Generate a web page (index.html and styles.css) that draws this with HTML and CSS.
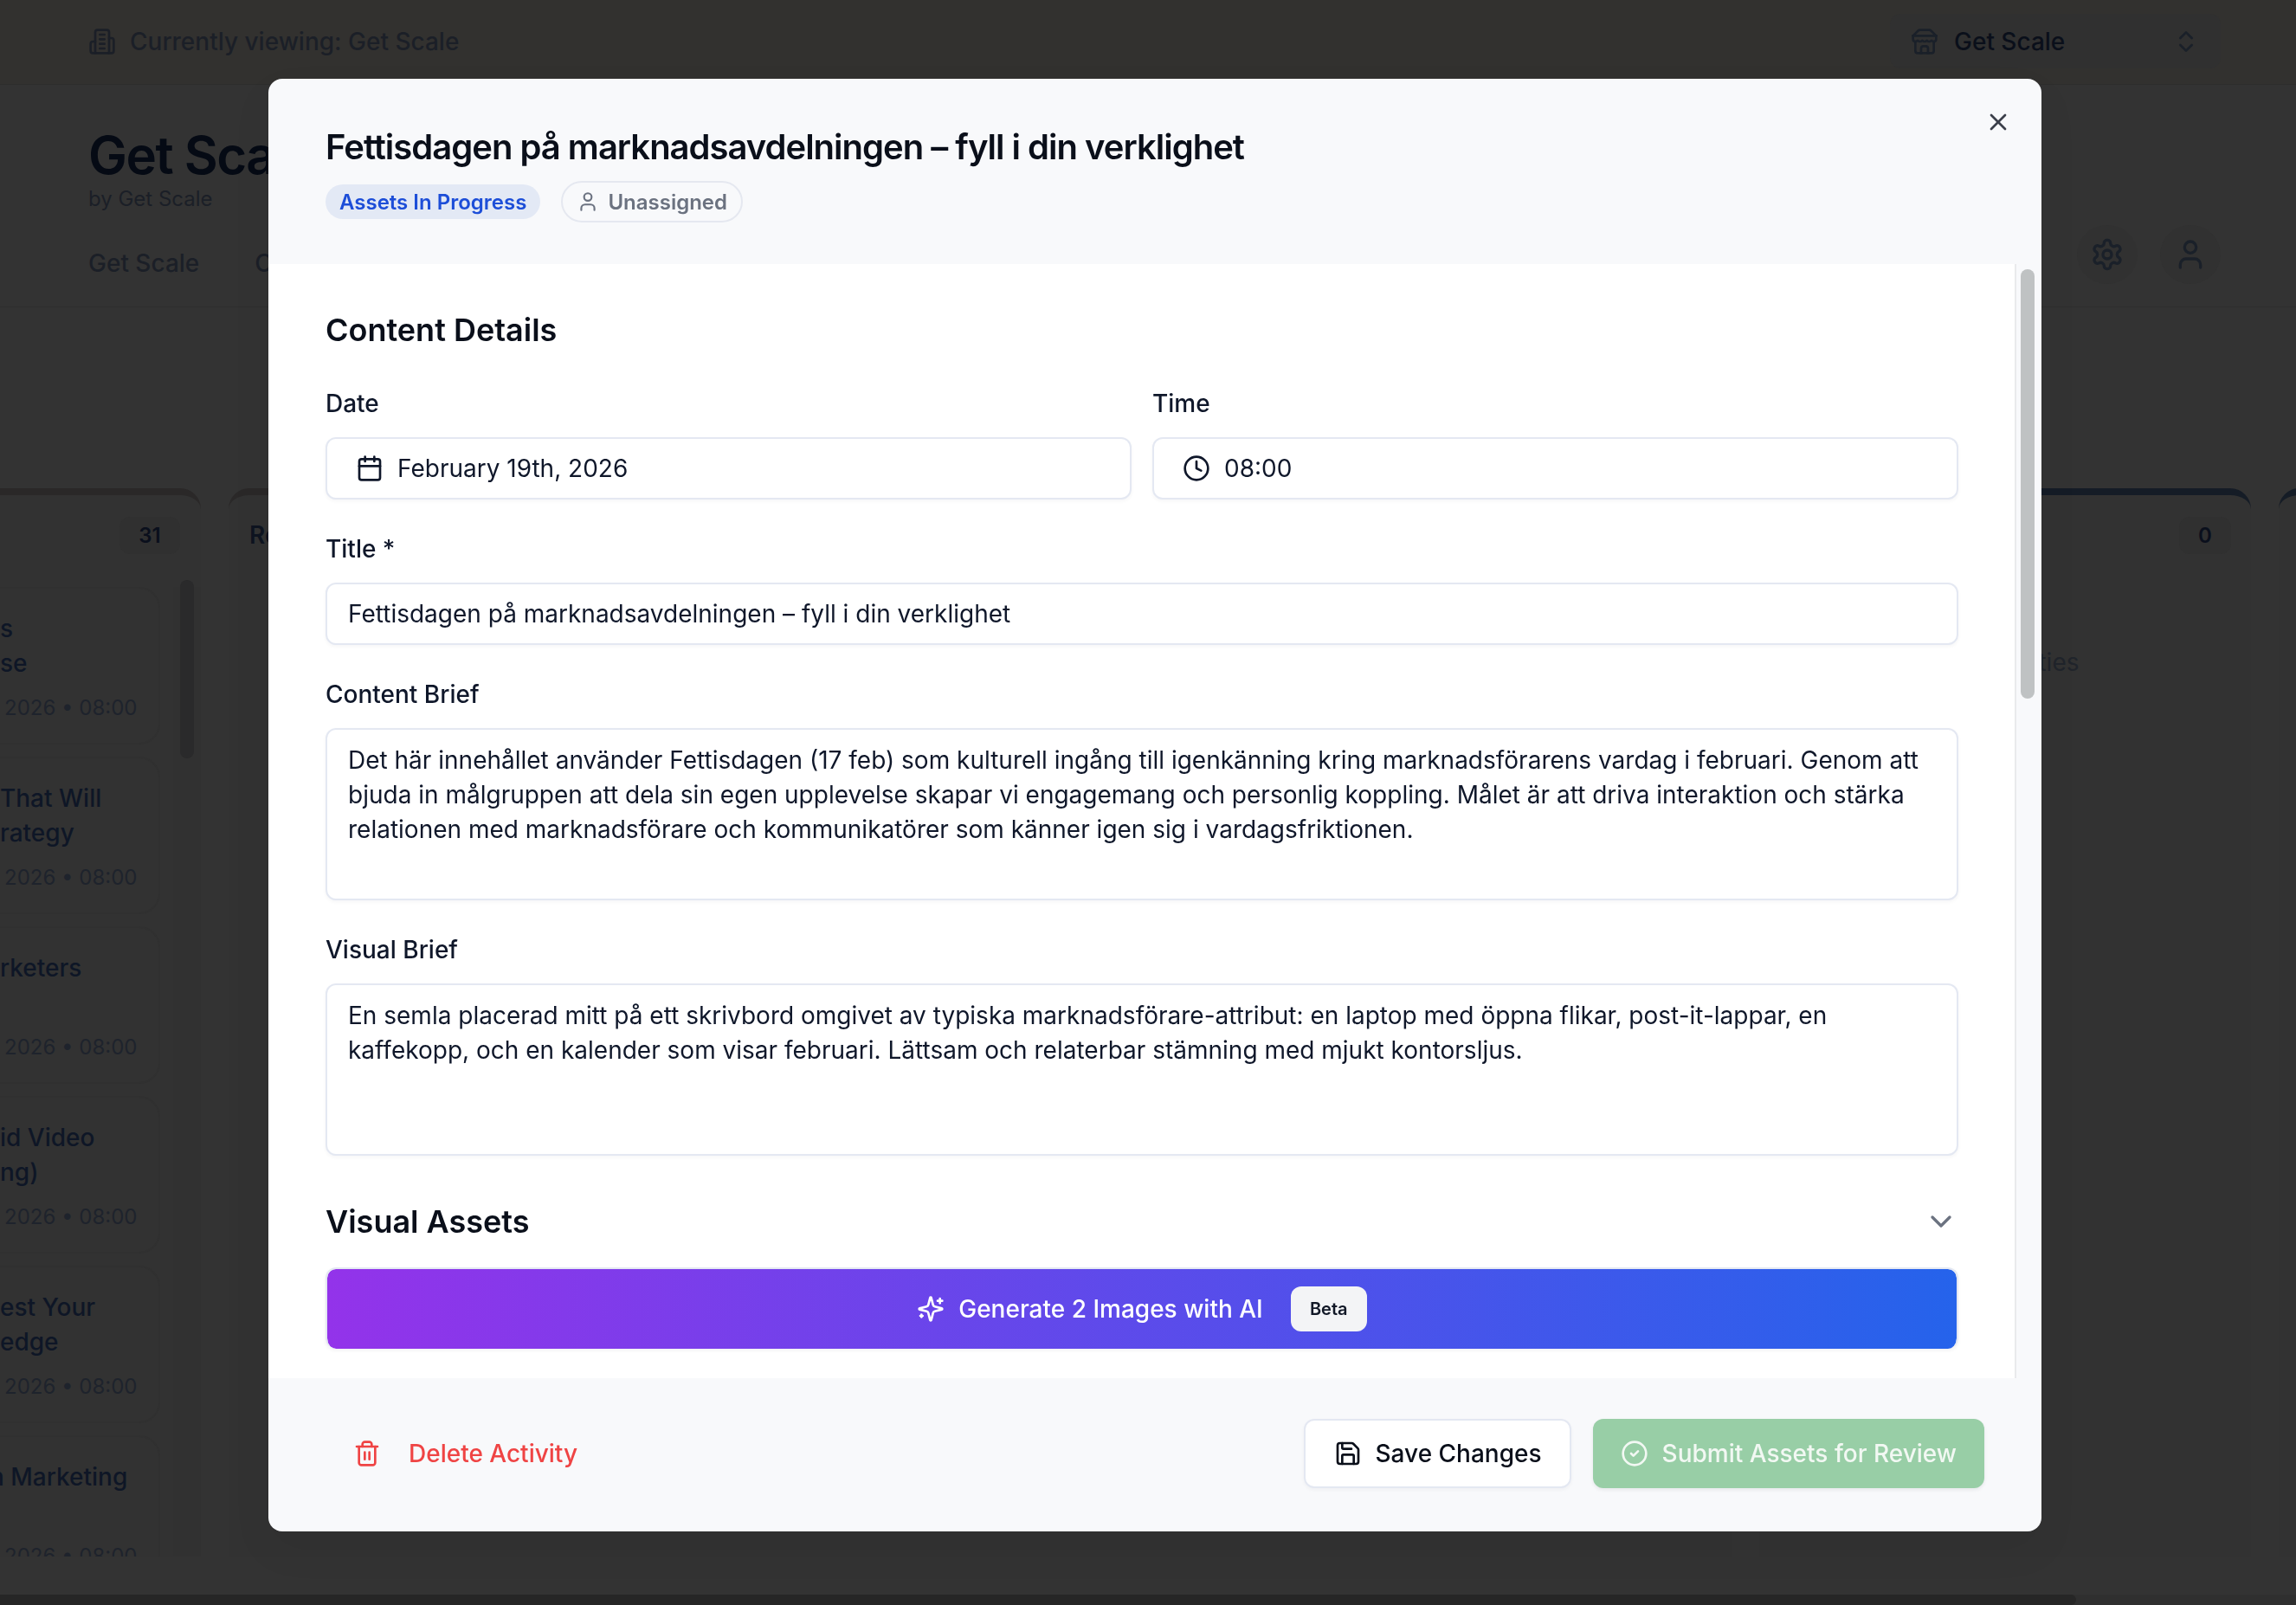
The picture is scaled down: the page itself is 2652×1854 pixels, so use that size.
FILE: index.html
```html
<!DOCTYPE html>
<html lang="en">
<head>
    <meta charset="UTF-8">
    <meta name="viewport" content="width=device-width, initial-scale=1.0">
    <title>Get Scale</title>
    <link rel="stylesheet" href="styles.css">
</head>
<body>
    <div class="page">
        <div class="topbar">
            <div class="viewing">
                <svg class="icon" viewBox="0 0 24 24"><path d="M6 22V4a2 2 0 0 1 2-2h8a2 2 0 0 1 2 2v18Z"/><path d="M6 12H4a2 2 0 0 0-2 2v6a2 2 0 0 0 2 2h2"/><path d="M18 9h2a2 2 0 0 1 2 2v9a2 2 0 0 1-2 2h-2"/><path d="M10 6h4"/><path d="M10 10h4"/><path d="M10 14h4"/><path d="M10 18h4"/></svg>
                <span>Currently viewing: Get Scale</span>
            </div>
            <div class="selector">
                <svg class="icon" viewBox="0 0 24 24"><path d="m2 7 4.41-4.41A2 2 0 0 1 7.83 2h8.34a2 2 0 0 1 1.42.59L22 7"/><path d="M4 12v8a2 2 0 0 0 2 2h12a2 2 0 0 0 2-2v-8"/><path d="M15 22v-4a2 2 0 0 0-2-2h-2a2 2 0 0 0-2 2v4"/><path d="M2 7h20"/><path d="M22 7v3a2 2 0 0 1-2 2a2.7 2.7 0 0 1-1.59-.63.7.7 0 0 0-.82 0A2.7 2.7 0 0 1 16 12a2.7 2.7 0 0 1-1.59-.63.7.7 0 0 0-.82 0A2.7 2.7 0 0 1 12 12a2.7 2.7 0 0 1-1.59-.63.7.7 0 0 0-.82 0A2.7 2.7 0 0 1 8 12a2.7 2.7 0 0 1-1.59-.63.7.7 0 0 0-.82 0A2.7 2.7 0 0 1 4 12a2 2 0 0 1-2-2V7"/></svg>
                <span class="selector-name">Get Scale</span>
                <svg class="icon" viewBox="0 0 24 24"><path d="m7 15 5 5 5-5"/><path d="m7 9 5-5 5 5"/></svg>
            </div>
        </div>

        <div class="page-head">
            <h2 class="brand">Get Scale</h2>
            <div class="brand-sub">by Get Scale</div>
            <div class="tabs">
                <div class="tab-links">
                    <span>Get Scale</span>
                    <span>Content</span>
                </div>
                <div class="head-actions">
                    <div class="round-btn">
                        <svg class="icon icon-large" viewBox="0 0 24 24"><path d="M12.22 2h-.44a2 2 0 0 0-2 2v.18a2 2 0 0 1-1 1.73l-.43.25a2 2 0 0 1-2 0l-.15-.08a2 2 0 0 0-2.73.73l-.22.38a2 2 0 0 0 .73 2.73l.15.1a2 2 0 0 1 1 1.72v.51a2 2 0 0 1-1 1.74l-.15.09a2 2 0 0 0-.73 2.73l.22.38a2 2 0 0 0 2.73.73l.15-.08a2 2 0 0 1 2 0l.43.25a2 2 0 0 1 1 1.73V20a2 2 0 0 0 2 2h.44a2 2 0 0 0 2-2v-.18a2 2 0 0 1 1-1.73l.43-.25a2 2 0 0 1 2 0l.15.08a2 2 0 0 0 2.73-.73l.22-.39a2 2 0 0 0-.73-2.73l-.15-.08a2 2 0 0 1-1-1.74v-.5a2 2 0 0 1 1-1.74l.15-.09a2 2 0 0 0 .73-2.73l-.22-.38a2 2 0 0 0-2.73-.73l-.15.08a2 2 0 0 1-2 0l-.43-.25a2 2 0 0 1-1-1.73V4a2 2 0 0 0-2-2z"/><circle cx="12" cy="12" r="3"/></svg>
                    </div>
                    <div class="round-btn">
                        <svg class="icon icon-large" viewBox="0 0 24 24"><path d="M19 21v-2a4 4 0 0 0-4-4H9a4 4 0 0 0-4 4v2"/><circle cx="12" cy="7" r="4"/></svg>
                    </div>
                </div>
            </div>
        </div>

        <div class="board">
            <div class="column column-first">
                <div class="column-head"><span class="count">31</span></div>
                <div class="column-body">
                    <div class="cards">
                        <div class="card"><div class="card-title">s<br>se</div><div class="card-meta">2026 • 08:00</div></div>
                        <div class="card"><div class="card-title">That Will<br>rategy</div><div class="card-meta">2026 • 08:00</div></div>
                        <div class="card"><div class="card-title">rketers<br>&nbsp;</div><div class="card-meta">2026 • 08:00</div></div>
                        <div class="card"><div class="card-title">id Video<br>ng)</div><div class="card-meta">2026 • 08:00</div></div>
                        <div class="card"><div class="card-title">est Your<br>edge</div><div class="card-meta">2026 • 08:00</div></div>
                        <div class="card"><div class="card-title card-title-clipped">n Marketing<br>&nbsp;</div><div class="card-meta">2026 • 08:00</div></div>
                    </div>
                    <div class="column-scroll"><div class="column-thumb"></div></div>
                </div>
            </div>
            <div class="column column-wide">
                <div class="column-head"><span class="column-name">Re</span></div>
            </div>
            <div class="column column-last">
                <div class="column-head"><span class="count">0</span></div>
                <div class="column-empty">No activities</div>
            </div>
            <div class="column column-next"></div>
        </div>

        <div class="hscroll"><div class="hscroll-thumb"></div></div>
    </div>

    <div class="modal-layer">
        <div class="modal">
            <div class="modal-head">
                <h1 class="modal-title">Fettisdagen på marknadsavdelningen – fyll i din verklighet</h1>
                <div class="badges">
                    <span class="badge-status">Assets In Progress</span>
                    <span class="badge-user">
                        <svg class="icon icon-small" viewBox="0 0 24 24"><path d="M19 21v-2a4 4 0 0 0-4-4H9a4 4 0 0 0-4 4v2"/><circle cx="12" cy="7" r="4"/></svg>
                        Unassigned
                    </span>
                </div>
                <svg class="icon modal-close" viewBox="0 0 24 24"><path d="M18 6 6 18"/><path d="m6 6 12 12"/></svg>
            </div>

            <div class="modal-body">
                <div class="modal-scroll">
                    <h2 class="section-title">Content Details</h2>

                    <div class="form-row">
                        <div class="form-group">
                            <label>Date</label>
                            <div class="field field-picker">
                                <svg class="icon" viewBox="0 0 24 24"><path d="M8 2v4"/><path d="M16 2v4"/><rect width="18" height="18" x="3" y="4" rx="2"/><path d="M3 10h18"/></svg>
                                February 19th, 2026
                            </div>
                        </div>
                        <div class="form-group">
                            <label>Time</label>
                            <div class="field field-picker">
                                <svg class="icon" viewBox="0 0 24 24"><circle cx="12" cy="12" r="10"/><polyline points="12 6 12 12 16 14"/></svg>
                                08:00
                            </div>
                        </div>
                    </div>

                    <div class="form-group">
                        <label>Title *</label>
                        <div class="field">Fettisdagen på marknadsavdelningen – fyll i din verklighet</div>
                    </div>

                    <div class="form-group">
                        <label>Content Brief</label>
                        <div class="field field-area">Det här innehållet använder Fettisdagen (17 feb) som kulturell ingång till igenkänning kring marknadsförarens vardag i februari. Genom att bjuda in målgruppen att dela sin egen upplevelse skapar vi engagemang och personlig koppling. Målet är att driva interaktion och stärka relationen med marknadsförare och kommunikatörer som känner igen sig i vardagsfriktionen.</div>
                    </div>

                    <div class="form-group">
                        <label>Visual Brief</label>
                        <div class="field field-area">En semla placerad mitt på ett skrivbord omgivet av typiska marknadsförare-attribut: en laptop med öppna flikar, post-it-lappar, en kaffekopp, och en kalender som visar februari. Lättsam och relaterbar stämning med mjukt kontorsljus.</div>
                    </div>

                    <div class="assets-head">
                        <h2 class="section-title">Visual Assets</h2>
                        <svg class="icon icon-large chevron" viewBox="0 0 24 24"><path d="m6 9 6 6 6-6"/></svg>
                    </div>

                    <div class="generate-btn">
                        <svg class="icon" viewBox="0 0 24 24"><path d="M9.937 15.5A2 2 0 0 0 8.5 14.063l-6.135-1.582a.5.5 0 0 1 0-.962L8.5 9.936A2 2 0 0 0 9.937 8.5l1.582-6.135a.5.5 0 0 1 .963 0L14.063 8.5A2 2 0 0 0 15.5 9.937l6.135 1.581a.5.5 0 0 1 0 .964L15.5 14.063a2 2 0 0 0-1.437 1.437l-1.582 6.135a.5.5 0 0 1-.963 0z"/><path d="M20 3v4"/><path d="M22 5h-4"/><path d="M4 17v2"/><path d="M5 18H3"/></svg>
                        <span>Generate 2 Images with AI</span>
                        <span class="beta">Beta</span>
                    </div>
                </div>
                <div class="scroll-track"><div class="scroll-thumb"></div></div>
            </div>

            <div class="modal-foot">
                <div class="delete-btn">
                    <svg class="icon" viewBox="0 0 24 24"><path d="M3 6h18"/><path d="M19 6v14c0 1-1 2-2 2H7c-1 0-2-1-2-2V6"/><path d="M8 6V4c0-1 1-2 2-2h4c1 0 2 1 2 2v2"/><line x1="10" x2="10" y1="11" y2="17"/><line x1="14" x2="14" y1="11" y2="17"/></svg>
                    Delete Activity
                </div>
                <div class="foot-actions">
                    <div class="save-btn">
                        <svg class="icon" viewBox="0 0 24 24"><path d="M15.2 3a2 2 0 0 1 1.4.6l3.8 3.8a2 2 0 0 1 .6 1.4V19a2 2 0 0 1-2 2H5a2 2 0 0 1-2-2V5a2 2 0 0 1 2-2z"/><path d="M17 21v-7a1 1 0 0 0-1-1H8a1 1 0 0 0-1 1v7"/><path d="M7 3v4a1 1 0 0 0 1 1h7"/></svg>
                        Save Changes
                    </div>
                    <div class="submit-btn">
                        <svg class="icon" viewBox="0 0 24 24"><circle cx="12" cy="12" r="10"/><path d="m9 12 2 2 4-4"/></svg>
                        Submit Assets for Review
                    </div>
                </div>
            </div>
        </div>
    </div>
</body>
</html>
```

FILE: styles.css
```css
* {
    box-sizing: border-box;
}
html, body {
    margin: 0;
    height: 100%;
    overflow: hidden;
}
body {
    font-family: Inter, "Liberation Sans", sans-serif;
    font-size: 28px;
    color: #0f172a;
    background-color: #333333;
}
.icon {
    width: 32px;
    height: 32px;
    flex-shrink: 0;
    fill: none;
    stroke: currentColor;
    stroke-width: 2;
    stroke-linecap: round;
    stroke-linejoin: round;
}
.icon-small {
    width: 26px;
    height: 26px;
}
.icon-large {
    width: 40px;
    height: 40px;
}

/* dimmed page behind the dialog */
.page {
    height: 100vh;
    display: flex;
    flex-direction: column;
    overflow: hidden;
}
.topbar {
    height: 98px;
    flex-shrink: 0;
    display: flex;
    align-items: center;
    justify-content: space-between;
    padding: 0 87px 0 102px;
    background-color: #32312f;
    border-bottom: 1px solid #2d2d2c;
}
.viewing {
    display: flex;
    align-items: center;
    gap: 16px;
    margin-top: -2px;
    font-weight: 500;
    color: #1b1f27;
}
.selector {
    width: 382px;
    height: 63px;
    margin-top: -2px;
    display: flex;
    align-items: center;
    gap: 18px;
    padding: 0 24px;
    color: #0a0f1a;
    font-weight: 500;
    background-color: #303030;
    border-radius: 12px;
}
.selector .icon {
    color: #1a2029;
}
.selector-name {
    flex: 1;
}
.page-head {
    flex-shrink: 0;
    padding-top: 49px;
    border-bottom: 1px solid #2e2e2e;
}
.brand {
    margin: 0;
    padding-left: 102px;
    font-size: 60px;
    font-weight: 600;
    line-height: 64px;
    letter-spacing: -1.5px;
    color: #050a14;
}
.brand-sub {
    padding-left: 102px;
    margin-top: 1px;
    font-size: 24px;
    line-height: 36px;
    color: #1b1f27;
}
.tabs {
    height: 94px;
    margin-top: 12px;
    display: flex;
    justify-content: space-between;
    padding: 0 87px 0 102px;
}
.tab-links {
    display: flex;
    gap: 64px;
    padding-top: 24px;
    line-height: 40px;
    font-weight: 500;
    color: #1b1f27;
}
.head-actions {
    display: flex;
    gap: 26px;
}
.round-btn {
    width: 70px;
    height: 68px;
    display: flex;
    align-items: center;
    justify-content: center;
    color: #1a2029;
    background-color: #313131;
    border-radius: 50%;
}
.board {
    flex: 1;
    min-height: 0;
    display: flex;
    gap: 32px;
    margin-top: 209px;
    margin-bottom: 44px;
}
.column {
    flex-shrink: 0;
    overflow: hidden;
    background-color: #323232;
    border-top: 8px solid #2a2828;
    border-radius: 24px 24px 0 0;
}
.column-first {
    width: 232px;
    border-radius: 0 24px 0 0;
}
.column-wide {
    width: 1736px;
}
.column-last {
    width: 568px;
    border-top-color: #151c26;
}
.column-last .column-head {
    padding-right: 23px;
}
.column-last .count {
    min-width: 60px;
}
.column-next {
    width: 400px;
    border-top-color: #151c26;
}
.column-head {
    height: 106px;
    padding: 25px 24px 0;
    display: flex;
    align-items: flex-start;
    justify-content: flex-end;
}
.column-wide .column-head {
    justify-content: flex-start;
}
.column-name {
    font-weight: 600;
    line-height: 43px;
    color: #0e1420;
}
.count {
    min-width: 70px;
    height: 43px;
    display: flex;
    align-items: center;
    justify-content: center;
    font-size: 24px;
    font-weight: 600;
    color: #0a0f1c;
    background-color: #303030;
    border-radius: 12px;
}
.column-body {
    display: flex;
}
.cards {
    flex: 1;
    display: flex;
    flex-direction: column;
    gap: 14px;
    margin-right: 15px;
    overflow: hidden;
}
.card {
    height: 182px;
    padding-top: 26px;
    border: 2px solid #303030;
    border-left: 0;
    border-radius: 0 24px 24px 0;
    flex-shrink: 0;
}
.card-title {
    line-height: 40px;
    font-weight: 500;
    color: #0e1626;
    white-space: nowrap;
}
.card-title-clipped {
    margin-left: -12px;
}
.card-meta {
    margin-top: 12px;
    padding-left: 5px;
    font-size: 24px;
    line-height: 40px;
    color: #1e232c;
    white-space: nowrap;
}
.column-scroll {
    width: 32px;
    flex-shrink: 0;
    padding: 0 8px;
    background-color: #313131;
}
.column-thumb {
    height: 206px;
    margin-top: -8px;
    background-color: #2a2a2b;
    border-radius: 8px;
}
.column-empty {
    padding-top: 67px;
    padding-left: 8px;
    text-align: center;
    line-height: 40px;
    color: #20242b;
}
.hscroll {
    height: 12px;
    flex-shrink: 0;
    background-color: #2f2f2f;
}
.hscroll-thumb {
    width: 2398px;
    height: 12px;
    background-color: #262626;
    border-radius: 0 8px 8px 0;
}

/* dialog */
.modal-layer {
    position: fixed;
    top: 0;
    left: 0;
    right: 0;
    bottom: 0;
    display: flex;
    justify-content: center;
    padding: 91px 0 0 16px;
}
.modal {
    width: 2048px;
    height: 1678px;
    display: flex;
    flex-direction: column;
    overflow: hidden;
    background-color: #f8f9fb;
    border-radius: 16px;
    box-shadow: 0 20px 50px rgba(0, 0, 0, 0.05);
}
.modal-head {
    position: relative;
    height: 214px;
    flex-shrink: 0;
    padding: 53px 66px 0;
}
.modal-title {
    margin: 0;
    font-size: 40px;
    font-weight: 600;
    line-height: 52px;
    letter-spacing: -1px;
    color: #0a0f1a;
}
.modal-close {
    position: absolute;
    top: 34px;
    right: 34px;
    color: #3b3f4a;
}
.badges {
    display: flex;
    align-items: center;
    gap: 24px;
    margin-top: 13px;
}
.badge-status {
    height: 40px;
    padding: 0 16px;
    display: flex;
    align-items: center;
    font-size: 24px;
    font-weight: 600;
    color: #1d4ed8;
    background-color: #e3e9f5;
    border-radius: 20px;
}
.badge-user {
    height: 48px;
    padding: 0 16px;
    display: flex;
    align-items: center;
    gap: 10px;
    font-size: 24px;
    font-weight: 600;
    color: #6b7280;
    border: 2px solid #e5e8f0;
    border-radius: 24px;
}
.modal-body {
    flex: 1;
    min-height: 0;
    display: flex;
    background-color: white;
}
.modal-scroll {
    flex: 1;
    min-width: 0;
    overflow: hidden;
    padding: 48px 65px 0 66px;
}
.scroll-track {
    width: 31px;
    flex-shrink: 0;
    padding: 6px 8px 0 5px;
    background-color: #f8f9fb;
    border-left: 2px solid #e9eaec;
}
.scroll-thumb {
    width: 16px;
    height: 496px;
    background-color: #bfc2c3;
    border-radius: 8px;
}
.section-title {
    margin: 0;
    font-size: 36px;
    font-weight: 600;
    line-height: 56px;
    color: #0a0f1a;
}
.form-row {
    display: grid;
    grid-template-columns: 1fr 1fr;
    gap: 24px;
}
.form-group {
    margin-top: 37px;
}
label {
    display: block;
    margin-bottom: 19px;
    font-weight: 500;
    line-height: 40px;
    color: #0f172a;
}
.field {
    height: 72px;
    padding: 0 24px;
    display: flex;
    align-items: center;
    line-height: 40px;
    color: #0f172a;
    background-color: white;
    border: 2px solid #e4e8f2;
    border-radius: 12px;
    box-shadow: 0 2px 4px rgba(15, 23, 42, 0.04);
}
.field-picker {
    gap: 16px;
    padding-left: 33px;
}
.field-area {
    display: block;
    height: 199px;
    padding-top: 15px;
}
.assets-head {
    display: flex;
    align-items: center;
    justify-content: space-between;
    margin-top: 48px;
    margin-bottom: 25px;
}
.chevron {
    color: #6b7280;
}
.generate-btn {
    height: 94px;
    display: flex;
    align-items: center;
    justify-content: center;
    gap: 16px;
    font-weight: 500;
    color: white;
    background: linear-gradient(90deg, #9333ea, #2563eb) padding-box;
    border: 2px solid #e4e8f2;
    border-bottom: 0;
    border-radius: 12px;
    box-shadow: 0 2px 4px rgba(15, 23, 42, 0.06);
}
.beta {
    width: 88px;
    height: 52px;
    margin-left: 16px;
    display: flex;
    align-items: center;
    justify-content: center;
    font-size: 20px;
    font-weight: 600;
    color: #111827;
    background-color: #f3f4f6;
    border-radius: 12px;
}
.modal-foot {
    height: 177px;
    flex-shrink: 0;
    display: flex;
    align-items: flex-start;
    justify-content: space-between;
    padding: 47px 66px 0 98px;
}
.delete-btn {
    height: 80px;
    display: flex;
    align-items: center;
    gap: 32px;
    font-weight: 500;
    color: #ef4444;
}
.foot-actions {
    display: flex;
    gap: 25px;
}
.save-btn {
    height: 80px;
    padding: 0 32px 0 33px;
    display: flex;
    align-items: center;
    gap: 16px;
    font-weight: 500;
    color: #0a0f1a;
    background-color: white;
    border: 2px solid #e4e8f2;
    border-radius: 12px;
    box-shadow: 0 2px 4px rgba(15, 23, 42, 0.04);
}
.submit-btn {
    height: 80px;
    padding: 0 32px;
    display: flex;
    align-items: center;
    gap: 16px;
    font-weight: 500;
    color: #f2f8f3;
    background-color: #98cea6;
    border-radius: 12px;
    box-shadow: 0 2px 4px rgba(15, 23, 42, 0.08);
}
```
